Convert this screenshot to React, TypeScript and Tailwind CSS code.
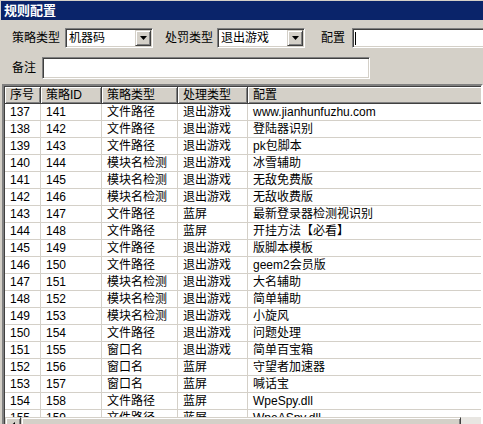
import React from "react";

const rows: [string, string, string, string, string][] = [
  ["137", "141", "文件路径", "退出游戏", "www.jianhunfuzhu.com"],
  ["138", "142", "文件路径", "退出游戏", "登陆器识别"],
  ["139", "143", "文件路径", "退出游戏", "pk包脚本"],
  ["140", "144", "模块名检测", "退出游戏", "冰雪辅助"],
  ["141", "145", "模块名检测", "退出游戏", "无敌免费版"],
  ["142", "146", "模块名检测", "退出游戏", "无敌收费版"],
  ["143", "147", "文件路径", "蓝屏", "最新登录器检测视识别"],
  ["144", "148", "文件路径", "蓝屏", "开挂方法【必看】"],
  ["145", "149", "文件路径", "退出游戏", "版脚本模板"],
  ["146", "150", "文件路径", "退出游戏", "geem2会员版"],
  ["147", "151", "模块名检测", "退出游戏", "大名辅助"],
  ["148", "152", "模块名检测", "退出游戏", "简单辅助"],
  ["149", "153", "模块名检测", "退出游戏", "小旋风"],
  ["150", "154", "文件路径", "退出游戏", "问题处理"],
  ["151", "155", "窗口名", "退出游戏", "简单百宝箱"],
  ["152", "156", "窗口名", "蓝屏", "守望者加速器"],
  ["153", "157", "窗口名", "蓝屏", "喊话宝"],
  ["154", "158", "文件路径", "蓝屏", "WpeSpy.dll"],
  ["155", "159", "文件路径", "蓝屏", "WpeASpy.dll"],
];

const widths = ["w-[36px]", "w-[61px]", "w-[76px]", "w-[70px]", "w-[400px]"];
const headers = ["序号", "策略ID", "策略类型", "处理类型", "配置"];

const sunken =
  "border border-t-[#808080] border-l-[#808080] border-b-white border-r-white shadow-[inset_1px_1px_0_#404040,inset_-1px_-1px_0_#d4d0c8]";

function Combo({ value, w }: { value: string; w: string }) {
  return (
    <div className={`${w} h-[20px] ${sunken} bg-white flex items-center`}>
      <div className="flex-1 pl-[3px] text-[12px] leading-[14px] text-black whitespace-nowrap overflow-hidden">{value}</div>
      <div className="w-[16px] h-[16px] mr-px bg-[#d4d0c8] border border-t-[#d4d0c8] border-l-[#d4d0c8] border-b-[#404040] border-r-[#404040] shadow-[inset_1px_1px_0_#fff,inset_-1px_-1px_0_#808080] flex items-center justify-center">
        <svg width="7" height="4" viewBox="0 0 7 4">
          <path d="M0 0h7L3.5 4z" fill="#000" />
        </svg>
      </div>
    </div>
  );
}

export default function App() {
  return (
    <div
      className="w-[483px] h-[424px] overflow-hidden bg-[#d4d0c8] flex flex-col text-[12px] text-black"
      style={{ fontFamily: '"Liberation Sans", "Noto Sans CJK SC", sans-serif' }}
    >
      <div className="h-[19px] mt-px ml-px bg-[#0a246a] flex items-center pl-[3px] text-white font-bold text-[13px] leading-none shrink-0">
        规则配置
      </div>

      <div className="mt-[8px] h-[20px] flex items-center shrink-0">
        <span className="ml-[12px] leading-none">策略类型</span>
        <div className="ml-[5px]">
          <Combo value="机器码" w="w-[88px]" />
        </div>
        <span className="ml-[12px] leading-none">处罚类型</span>
        <div className="ml-[4px]">
          <Combo value="退出游戏" w="w-[88px]" />
        </div>
        <span className="ml-[16px] leading-none">配置</span>
        <div className={`ml-[7px] flex-1 h-[20px] mr-[-4px] ${sunken} bg-white flex items-center`}>
          <div className="ml-[2px] w-px h-[13px] bg-black" />
        </div>
      </div>

      <div className="mt-[9px] h-[22px] flex items-center shrink-0">
        <span className="ml-[12px] leading-none">备注</span>
        <div className={`ml-[6px] w-[328px] h-[22px] ${sunken} bg-white`} />
      </div>

      <div className="mt-[5px] ml-[2px] h-[351px] shrink-0 flex flex-col border-2 border-t-[#808080] border-l-[#808080] border-b-white border-r-white shadow-[inset_1px_1px_0_#404040] bg-white overflow-hidden">
        <div className="flex h-[17px] shrink-0 mt-px ml-px">
          {headers.map((h, i) => (
            <div
              key={h}
              className={`${widths[i]} shrink-0 h-[17px] bg-[#d4d0c8] border-r border-b border-[#404040] shadow-[inset_1px_1px_0_#fff,inset_-1px_-1px_0_#808080] pl-[5px] flex items-center leading-none whitespace-nowrap`}
            >
              {h}
            </div>
          ))}
        </div>
        <div className="flex-1 overflow-hidden ml-px">
          {rows.map((r) => (
            <div key={r[0]} className="flex h-[17px]">
              {r.map((c, i) => (
                <div
                  key={i}
                  className={`${widths[i]} shrink-0 h-[17px] border-r border-b border-[#d4d0c8] pl-[5px] flex items-center leading-none whitespace-nowrap`}
                >
                  {c}
                </div>
              ))}
            </div>
          ))}
        </div>
        <div className="h-[16px] shrink-0 flex bg-[#e8e6e2] ml-px">
          <div className="w-[16px] h-[16px] bg-[#d4d0c8] border border-t-[#d4d0c8] border-l-[#d4d0c8] border-b-[#404040] border-r-[#404040] shadow-[inset_1px_1px_0_#fff,inset_-1px_-1px_0_#808080] flex items-center justify-center">
            <svg width="4" height="7" viewBox="0 0 4 7">
              <path d="M4 0v7L0 3.5z" fill="#000" />
            </svg>
          </div>
          <div className="w-[440px] h-[16px] bg-[#d4d0c8] border border-t-[#d4d0c8] border-l-[#d4d0c8] border-b-[#404040] border-r-[#404040] shadow-[inset_1px_1px_0_#fff,inset_-1px_-1px_0_#808080]" />
        </div>
      </div>
    </div>
  );
}
